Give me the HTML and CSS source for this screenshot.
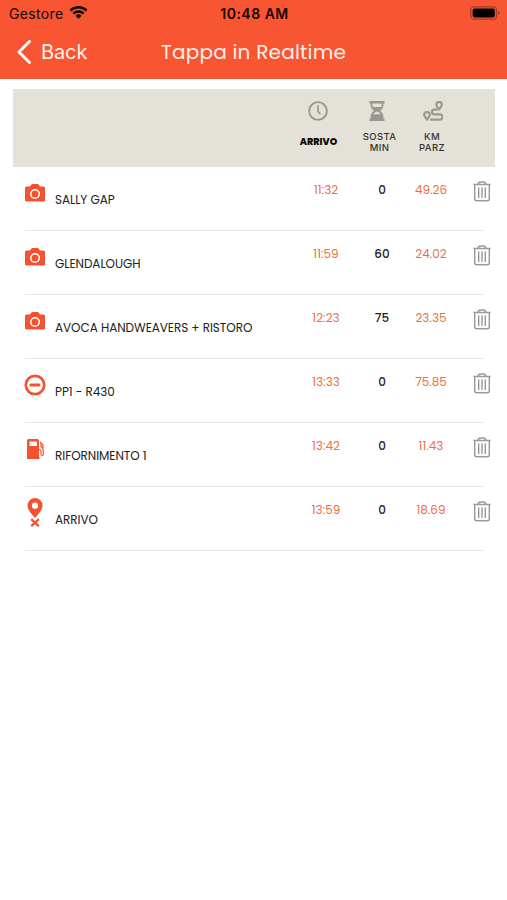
FILE: index.html
```html
<!DOCTYPE html>
<html lang="it">
<head>
<meta charset="utf-8">
<title>Tappa in Realtime</title>
<link rel="stylesheet" href="styles.css">
</head>
<body>
<svg class="sprite" aria-hidden="true">
  <symbol id="camera" viewBox="0 0 20 18"><path fill-rule="evenodd" fill="currentColor" d="M1.500 2.500H5L6.200.8Q6.700 0 7.600 0h4.800q.9 0 1.400.8L15 2.500h3.500Q20 2.500 20 4v12q0 1.500-1.500 1.500h-17Q0 17.500 0 16V4Q0 2.500 1.500 2.500ZM10 5a5 5 0 1 0 0 10 5 5 0 0 0 0-10Zm0 1.500a3.500 3.500 0 1 1 0 7 3.500 3.500 0 0 1 0-7Z"/></symbol>
  <symbol id="stop" viewBox="0 0 22 22"><circle cx="11" cy="11" r="9.200" fill="none" stroke="currentColor" stroke-width="2.700"/><path d="M7 11h8" stroke="currentColor" stroke-width="3.200" stroke-linecap="round"/></symbol>
  <symbol id="fuel" viewBox="0 0 18 20"><path fill-rule="evenodd" fill="currentColor" d="M1.500 0h9Q12 0 12 1.500V18h.5v2H0V1.500Q0 0 1.500 0ZM2.500 2.500V7h7.500V2.500Z"/><path d="M12 10.500q2 0 2 2V15q0 1.500 1.200 1.500T16.400 15L15.800 9 14 7.500v-3M13 3l3 3v3.500" fill="none" stroke="currentColor" stroke-width="1.200"/></symbol>
  <symbol id="finish" viewBox="0 0 16 29"><path fill-rule="evenodd" fill="currentColor" d="M8 0a7.500 7.500 0 0 1 7.500 7.500C15.500 12 11 16.500 8 20 5 16.500.5 12 .5 7.500A7.500 7.500 0 0 1 8 0Zm0 4.600a3.100 3.100 0 1 0 0 6.200 3.100 3.100 0 0 0 0-6.200Z"/><path d="m4.200 21.200 7.600 7m0-7-7.600 7" stroke="currentColor" stroke-width="2.300"/></symbol>
  <symbol id="trash" viewBox="0 0 18 21"><g fill="none" stroke="currentColor"><path d="M.5 3.500h17M5 3.200Q5.500 1 7.500 1h3Q12.500 1 13 3.200" stroke-width="1.500"/><path d="M1.700 4v13.700q0 2 2 2h10.600q2 0 2-2V4" stroke-width="1.400"/><path d="M5.700 7v9.500M9 7v9.500M12.300 7v9.500" stroke-width="1.400" stroke-linecap="round"/></g></symbol>
</svg>
<header class="app-header">
  <div class="status-bar">
    <div class="carrier"><span class="carrier-name">Gestore</span>
      <svg class="wifi" viewBox="0 0 18 13"><g fill="none" stroke="currentColor" stroke-width="2.500"><path d="M.9 4.600a11.500 11.500 0 0 1 16.200 0"/><path d="M3.900 7.700a7.200 7.200 0 0 1 10.200 0"/></g><path d="M6 9.800a4.300 4.300 0 0 1 6 0l-3 3Z" fill="currentColor"/></svg>
    </div>
    <span class="clock">10:48 AM</span>
    <svg class="battery" viewBox="0 0 30 14"><rect x=".8" y=".8" width="25.800" height="12.400" rx="3.500" fill="none" stroke="#a33c24" stroke-width="1.300"/><rect x="2.600" y="2.600" width="22.200" height="8.800" rx="1.800"/><path d="M28 5q1.600.5 1.600 2T28 9Z" fill="#a33c24"/></svg>
  </div>
  <nav class="nav-bar">
    <a class="back"><svg class="chevron" viewBox="0 0 14 24"><path d="M12.500 1.500 2 12l10.500 10.500" fill="none" stroke="currentColor" stroke-width="2.900" stroke-linecap="round" stroke-linejoin="round"/></svg><span>Back</span></a>
    <h1 class="title">Tappa in Realtime</h1>
  </nav>
</header>
<main>
  <section class="columns">
    <div class="column arrival"><svg class="col-icon" viewBox="0 0 20 20"><g fill="none" stroke="currentColor" stroke-width="1.900"><circle cx="10" cy="10" r="8.900"/><path d="M10 4.300v6.200l2.500 2.800" stroke-width="1.700"/></g></svg><span class="label">ARRIVO</span></div>
    <div class="column stay"><svg class="col-icon" viewBox="0 0 20 20"><path d="M2.500 1.300h15M2.500 18.700h15" stroke="currentColor" stroke-width="2.600"/><path d="M4.500 2v2.500c0 3 2 4 4 5.500-2 1.500-4 2.500-4 5.500V18m11-16v2.500c0 3-2 4-4 5.500 2 1.500 4 2.500 4 5.500V18" fill="none" stroke="currentColor" stroke-width="1.800"/><path d="M5 6h10l-4 4.500H9ZM4.500 15l2-1.800h7l2 1.800v3.500h-11Z" fill="currentColor"/></svg><span class="label">SOSTA<br>MIN</span></div>
    <div class="column distance"><svg class="col-icon" viewBox="0 0 20 20"><g fill="none" stroke="currentColor"><path d="M16.100 1a2.700 2.700 0 0 1 2.700 2.700c0 1.800-1.600 3.300-2.700 4.600-1.100-1.300-2.700-2.800-2.700-4.600A2.700 2.700 0 0 1 16.100 1ZM4 11a2.800 2.800 0 0 1 2.800 2.800c0 1.800-1.700 3.300-2.800 4.700-1.100-1.400-2.800-2.900-2.800-4.700A2.800 2.800 0 0 1 4 11Z" stroke-width="2.200"/><path d="M14.500 8.700h-3.200a2.300 2.300 0 0 0 0 4.600h5.400a2.700 2.700 0 0 1 0 5.400H7" stroke-width="2.200"/></g></svg><span class="label">KM<br>PARZ</span></div>
  </section>
  <ul class="stops">
    <li class="stop"><svg class="kind camera"><use href="#camera"/></svg><span class="name">SALLY GAP</span><span class="time">11:32</span><span class="pause">0</span><span class="km">49.26</span><svg class="trash"><use href="#trash"/></svg></li>
    <li class="stop"><svg class="kind camera"><use href="#camera"/></svg><span class="name">GLENDALOUGH</span><span class="time">11:59</span><span class="pause">60</span><span class="km">24.02</span><svg class="trash"><use href="#trash"/></svg></li>
    <li class="stop"><svg class="kind camera"><use href="#camera"/></svg><span class="name">AVOCA HANDWEAVERS + RISTORO</span><span class="time">12:23</span><span class="pause">75</span><span class="km">23.35</span><svg class="trash"><use href="#trash"/></svg></li>
    <li class="stop"><svg class="kind no-entry"><use href="#stop"/></svg><span class="name">PP1 - R430</span><span class="time">13:33</span><span class="pause">0</span><span class="km">75.85</span><svg class="trash"><use href="#trash"/></svg></li>
    <li class="stop"><svg class="kind fuel"><use href="#fuel"/></svg><span class="name">RIFORNIMENTO 1</span><span class="time">13:42</span><span class="pause">0</span><span class="km">11.43</span><svg class="trash"><use href="#trash"/></svg></li>
    <li class="stop"><svg class="kind finish"><use href="#finish"/></svg><span class="name">ARRIVO</span><span class="time">13:59</span><span class="pause">0</span><span class="km">18.69</span><svg class="trash"><use href="#trash"/></svg></li>
  </ul>
</main>
</body>
</html>
```
FILE: styles.css
```css
* { box-sizing: border-box; }
body { margin: 0; min-height: 900px; background: #fff; color: #222; font-family: Poppins, Inter, "Liberation Sans", sans-serif; }
.sprite { display: none; }
svg { display: block; flex: none; }

.app-header { height: 79px; background: #f85632; }
.status-bar { display: grid; grid-template-columns: 1fr auto 1fr; align-items: center; height: 27px; padding: 0 7px 0 9px; color: #140502; font-family: Inter, sans-serif; font-size: 14px; }
.carrier { display: flex; align-items: center; gap: 5px; }
.carrier-name { letter-spacing: .35px; }
.wifi { width: 19px; height: 13px; margin-top: -2px; }
.clock { font-weight: 600; letter-spacing: .5px; }
.battery { width: 30px; height: 14px; justify-self: end; margin-top: -1px; }
.nav-bar { display: grid; grid-template-columns: 1fr auto 1fr; align-items: center; height: 50px; padding: 0 17px; color: #fff0ea; }
.back { display: flex; align-items: center; gap: 10px; font-family: Inter, sans-serif; font-size: 20px; letter-spacing: -.1px; }
.chevron { width: 14px; height: 24px; color: #fff; }
.title { margin: 0; font-size: 20px; font-weight: 400; letter-spacing: .22px; white-space: nowrap; }

.columns { display: grid; grid-template-columns: 50px 72px 34px; justify-content: start; height: 78px; margin: 10px 12px 0 13px; padding: 12px 0 0 280px; background: #e4e1d8; }
.column { display: flex; flex-direction: column; align-items: center; }
.col-icon { width: 20px; height: 20px; color: #99978f; }
.label { margin-top: 10px; font-family: Inter, sans-serif; font-size: 9.500px; font-weight: 500; line-height: 11px; letter-spacing: .4px; text-align: center; color: #35342f; }
.arrival .label { margin: 15px 0 0 1px; font-family: Poppins, Inter, sans-serif; font-weight: 800; letter-spacing: .05px; color: #0b0b09; }
.stay .label { margin-left: 1px; }
.stay .col-icon { margin-left: -4px; }
.distance .col-icon { margin-left: 2px; }

.stops { list-style: none; margin: 0 24px 0 25px; padding: 0; }
.stop { display: grid; grid-template-columns: 30px 245px 52px 60px 38px 23px 18px; height: 64px; border-bottom: 1px solid #e6e6e6; }
.kind { color: #f4512e; }
.camera { width: 20px; height: 18px; margin-top: 17px; }
.no-entry { width: 22px; height: 22px; margin: 15px 0 0 -1px; }
.fuel { width: 18px; height: 20px; margin: 16px 0 0 2px; }
.finish { width: 16px; height: 29px; margin: 11px 0 0 2px; }
.name { padding-top: 24px; font-size: 12px; line-height: 18px; letter-spacing: -.05px; white-space: nowrap; }
.time, .pause, .km { padding-top: 14px; font-size: 12px; line-height: 18px; text-align: center; color: #f0703f; }
.pause { font-weight: 500; color: #222; }
.trash { grid-column: 7; width: 18px; height: 21px; margin-top: 14px; color: #999a94; }
```
